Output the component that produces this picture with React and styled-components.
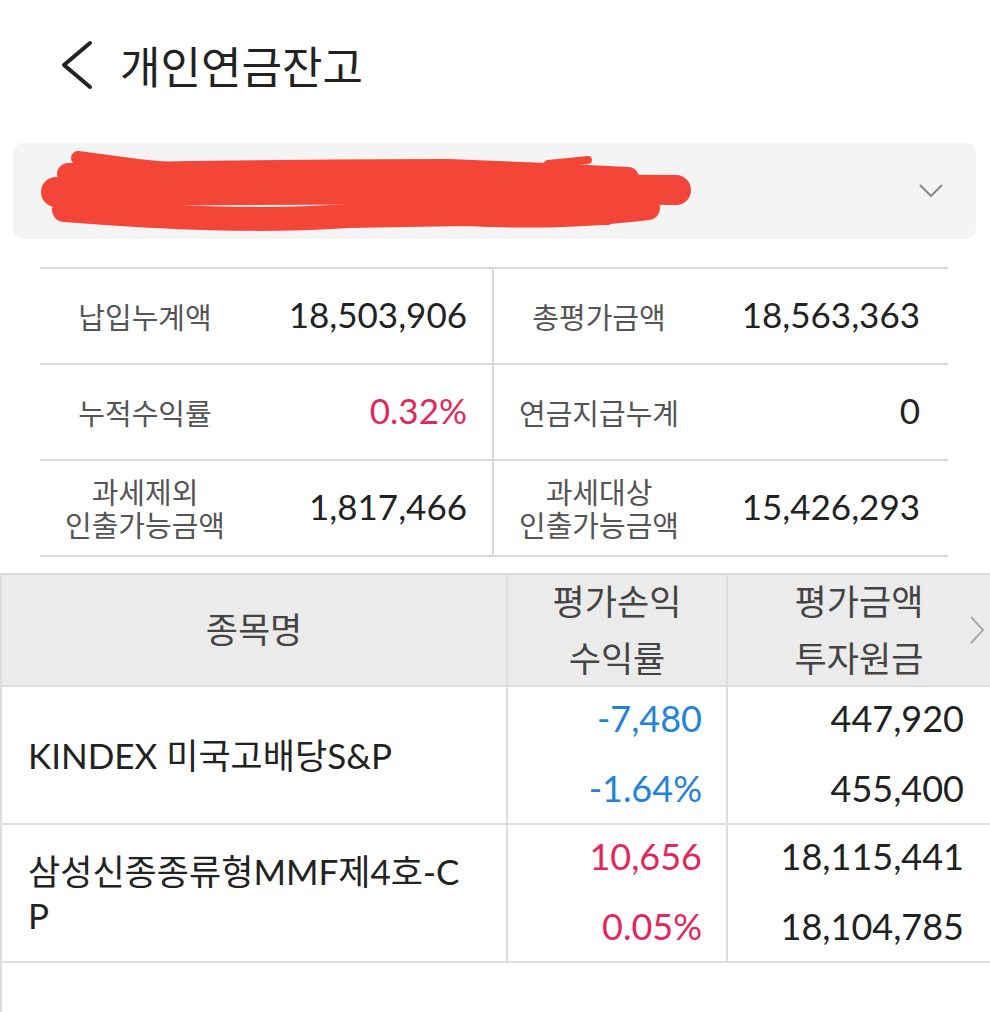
import React from "react";
import styled, { createGlobalStyle } from "styled-components";

const GlobalStyle = createGlobalStyle`
  * {
    box-sizing: border-box;
  }
  body {
    margin: 0;
    background-color: #ffffff;
    font-family: "Lato", "Noto Sans CJK KR", sans-serif;
    color: #222222;
  }
`;

const Page = styled.div`
  width: 990px;
  min-height: 1012px;
  overflow: hidden;
`;

const Header = styled.header`
  display: flex;
  align-items: center;
  gap: 26px;
  height: 130px;
  padding-left: 60px;
`;

const Title = styled.h1`
  margin: 0;
  font-family: "Noto Sans CJK KR", sans-serif;
  font-size: 44px;
  font-weight: 400;
  color: #222222;
`;

const AccountSelect = styled.div`
  display: flex;
  align-items: center;
  justify-content: space-between;
  height: 96px;
  margin: 13px 14px 0 13px;
  padding: 0 32px 0 15px;
  border-radius: 10px;
  background-color: #f4f4f4;
`;

const Summary = styled.div`
  display: grid;
  grid-template-columns: 1fr 1fr;
  margin: 28px 42px 0 40px;
  border-top: 2px solid #d8d8d8;
`;

const SummaryItem = styled.div`
  display: grid;
  grid-template-columns: 210px 1fr;
  align-items: center;
  height: 96px;
  border-bottom: 2px solid #d8d8d8;
  border-right: ${(p) => (p.$left ? "2px solid #d8d8d8" : "none")};
`;

const SummaryLabel = styled.div`
  display: flex;
  flex-direction: column;
  align-items: center;
  gap: 2px;
  font-family: "Noto Sans CJK KR", sans-serif;
  font-size: 29px;
  line-height: 31px;
  color: #555555;
  white-space: nowrap;
`;

const SummaryValue = styled.div`
  padding-right: ${(p) => (p.$left ? "25px" : "28px")};
  padding-bottom: 4px;
  font-size: 35px;
  color: ${(p) => p.$color || "#222222"};
  text-align: right;
`;

const Holdings = styled.div`
  position: relative;
  margin-top: 16px;
  border-left: 2px solid #dddddd;
`;

const Row = styled.div`
  display: grid;
  grid-template-columns: 504px 220px 1fr;
  height: ${(p) => p.$height}px;
  border-bottom: 2px solid #dddddd;
  border-top: ${(p) => (p.$head ? "2px solid #dddddd" : "none")};
  background-color: ${(p) => (p.$head ? "#ebebeb" : "#ffffff")};
`;

const HeadCell = styled.div`
  display: flex;
  flex-direction: column;
  align-items: center;
  justify-content: center;
  gap: 13px;
  padding-bottom: 4px;
  border-left: ${(p) => (p.$first ? "none" : "2px solid #dddddd")};
  font-family: "Noto Sans CJK KR", sans-serif;
  font-size: 35px;
  line-height: 44px;
  color: #444444;
`;

const NameCell = styled.div`
  display: flex;
  align-items: center;
  padding: 0 40px 0 26px;
  font-size: 35px;
  line-height: 44px;
  color: #222222;
  word-break: break-all;
`;

const NumCell = styled.div`
  display: flex;
  flex-direction: column;
  justify-content: center;
  align-items: flex-end;
  gap: 26px;
  padding-right: ${(p) => p.$pad}px;
  padding-bottom: 4px;
  border-left: 2px solid #dddddd;
  font-size: 36px;
  line-height: 44px;
`;

const Num = styled.span`
  color: ${(p) => p.$color || "#222222"};
`;

const MoreArrow = styled.svg`
  position: absolute;
  right: 4px;
  top: 42px;
`;

const RED = "#e3265b";
const BLUE = "#2283d8";

const summary = [
  [["납입누계액"], "18,503,906"],
  [["총평가금액"], "18,563,363"],
  [["누적수익률"], "0.32%", RED],
  [["연금지급누계"], "0"],
  [["과세제외", "인출가능금액"], "1,817,466"],
  [["과세대상", "인출가능금액"], "15,426,293"],
];

const holdings = [
  {
    name: "KINDEX 미국고배당S&P",
    profit: "-7,480",
    rate: "-1.64%",
    tone: BLUE,
    value: "447,920",
    principal: "455,400",
  },
  {
    name: "삼성신종종류형MMF제4호-CP",
    profit: "10,656",
    rate: "0.05%",
    tone: RED,
    value: "18,115,441",
    principal: "18,104,785",
  },
];

const Redaction = () => (
  <svg width="665" height="82" viewBox="0 0 665 82">
    <g stroke="#f44638" strokeLinecap="round" strokeLinejoin="round" fill="none">
      <path d="M50 8 L110 16 L190 24" strokeWidth="14" />
      <path d="M40 24 C160 22 300 20 420 20 L520 24 L600 28" strokeWidth="22" />
      <path d="M28 42 C200 40 420 38 648 40" strokeWidth="30" />
      <path d="M36 60 C140 68 230 72 320 66 L440 64 C520 68 570 64 620 58" strokeWidth="24" />
      <path d="M190 74 L320 72" strokeWidth="10" />
      <path d="M460 72 L580 70" strokeWidth="10" />
      <path d="M520 14 L560 10" strokeWidth="8" />
    </g>
  </svg>
);

const App = () => (
  <Page>
    <GlobalStyle />
    <Header>
      <svg width="34" height="50" viewBox="0 0 34 50">
        <path
          d="M30 3 L4 25 L30 47"
          stroke="#222222"
          strokeWidth="4"
          fill="none"
          strokeLinecap="round"
          strokeLinejoin="round"
        />
      </svg>
      <Title>개인연금잔고</Title>
    </Header>

    <AccountSelect>
      <Redaction />
      <svg width="26" height="16" viewBox="0 0 26 16">
        <path d="M2 2 L13 13 L24 2" stroke="#888888" strokeWidth="2" fill="none" />
      </svg>
    </AccountSelect>

    <Summary>
      {summary.map(([label, value, color], i) => (
        <SummaryItem key={i} $left={i % 2 === 0}>
          <SummaryLabel>
            {label.map((l) => (
              <span key={l}>{l}</span>
            ))}
          </SummaryLabel>
          <SummaryValue $left={i % 2 === 0} $color={color}>
            {value}
          </SummaryValue>
        </SummaryItem>
      ))}
    </Summary>

    <Holdings>
      <Row $head $height={114}>
        <HeadCell $first>종목명</HeadCell>
        <HeadCell>
          <span>평가손익</span>
          <span>수익률</span>
        </HeadCell>
        <HeadCell>
          <span>평가금액</span>
          <span>투자원금</span>
        </HeadCell>
      </Row>
      <MoreArrow width="18" height="30" viewBox="0 0 18 30">
        <path d="M3 2 L15 15 L3 28" stroke="#aaaaaa" strokeWidth="2" fill="none" />
      </MoreArrow>
      {holdings.map((h) => (
        <Row key={h.name} $height={138}>
          <NameCell>{h.name}</NameCell>
          <NumCell $pad={24}>
            <Num $color={h.tone}>{h.profit}</Num>
            <Num $color={h.tone}>{h.rate}</Num>
          </NumCell>
          <NumCell $pad={26}>
            <Num>{h.value}</Num>
            <Num>{h.principal}</Num>
          </NumCell>
        </Row>
      ))}
      <Row $height={80} />
    </Holdings>
  </Page>
);

export default App;
